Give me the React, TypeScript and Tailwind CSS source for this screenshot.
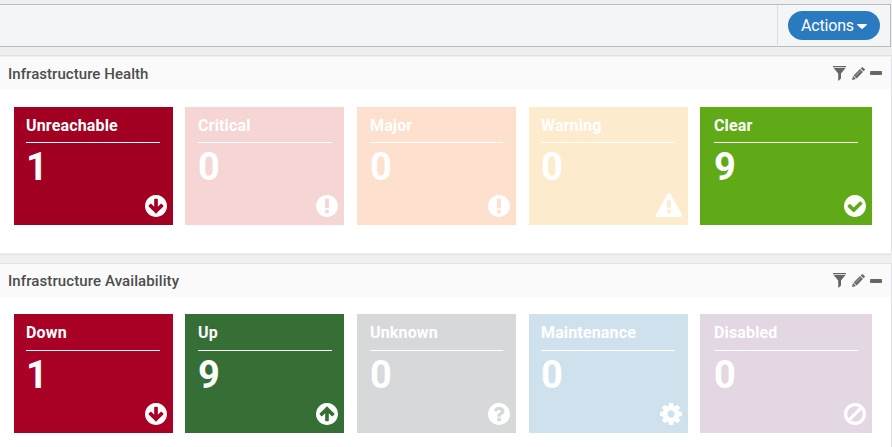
import React from "react";

const DISC =
  "q0 209-103 385.5t-279.5 279.5-385.5 103-385.5-103-279.5-279.5-103-385.5 103-385.5 279.5-279.5 385.5-103 385.5 103 279.5 279.5 103 385.5z";

const ARROW =
  "M1413 896q0-27-18-45l-91-91q-18-18-45-18t-45 18l-189 189v-502q0-26-19-45t-45-19h-128q-26 0-45 19t-19 45v502l-189-189q-19-19-45-19t-45 19l-91 91q-18 18-18 45t18 45l362 362 91 91q18 18 45 18t45-18l91-91 362-362q18-18 18-45zm251 0" + DISC;

const PATHS = {
  down: ARROW,
  up: ARROW,
  alert:
    "M896 128q209 0 385.5 103t279.5 279.5 103 385.5-103 385.5-279.5 279.5-385.5 103-385.5-103-279.5-279.5-103-385.5 103-385.5 279.5-279.5 385.5-103zm128 1247v-190q0-14-9-23.5t-22-9.5h-192q-13 0-23 10t-10 23v190q0 13 10 23t23 10h192q13 0 22-9.5t9-23.5zm-2-344l18-621q0-12-10-18-10-8-24-8h-220q-14 0-24 8-10 6-10 18l17 621q0 10 10 17.5t24 7.5h185q14 0 23.5-7.5t10.5-17.5z",
  triangle:
    "M1024 1375v-190q0-14-9.5-23.5t-22.5-9.5h-192q-13 0-22.5 9.5t-9.5 23.5v190q0 14 9.5 23.5t22.5 9.5h192q13 0 22.5-9.5t9.5-23.5zm-2-374l18-459q0-12-10-19-13-11-24-11h-220q-11 0-24 11-10 7-10 21l17 457q0 10 10 16.5t24 6.5h185q14 0 23.5-6.5t10.5-16.5zm-14-934l768 1408q35 63-2 126-17 29-46.5 46t-63.5 17h-1536q-34 0-63.5-17t-46.5-46q-37-63-2-126l768-1408q17-31 47-49t65-18 65 18 47 49z",
  check:
    "M1412 734q0-28-18-46l-91-90q-19-19-45-19t-45 19l-408 407-226-226q-19-19-45-19t-45 19l-91 90q-18 18-18 46 0 27 18 45l362 362q19 19 45 19 27 0 46-19l543-543q18-18 18-45zm252 162" + DISC,
  question:
    "M1024 1376v-192q0-14-9-23t-23-9h-192q-14 0-23 9t-9 23v192q0 14 9 23t23 9h192q14 0 23-9t9-23zm256-672q0-88-55.5-163t-138.5-116-170-41q-243 0-371 213-15 24 8 42l132 100q7 6 19 6 16 0 25-12 53-68 86-92 34-24 86-24 48 0 85.5 26t37.5 59q0 38-20 61t-68 45q-63 28-115.5 86.5t-52.5 125.5v36q0 14 9 23t23 9h192q14 0 23-9t9-23q0-19 21.5-49.5t54.5-49.5q32-18 49-28.5t46-35 44.5-48 28-60.5 12.5-81zm384 192" + DISC,
  cog: "M1152 896q0-106-75-181t-181-75-181 75-75 181 75 181 181 75 181-75 75-181zm512-109v222q0 12-8 23t-20 13l-185 28q-19 54-39 91 35 50 107 138 10 12 10 25t-9 23q-27 37-99 108t-94 71q-12 0-26-9l-138-108q-44 23-91 38-16 136-29 186-7 28-36 28h-222q-14 0-24.5-8.5t-11.5-21.5l-28-184q-49-16-90-37l-141 107q-10 9-25 9-14 0-25-11-126-114-165-168-7-10-7-23 0-12 8-23 15-21 51-66.5t54-70.5q-27-50-41-99l-183-27q-13-2-21-12.5t-8-23.5v-222q0-12 8-23t19-13l186-28q14-46 39-92-40-57-107-138-10-12-10-24 0-10 9-23 26-36 98.5-107.5t94.5-71.5q13 0 26 10l138 107q44-23 91-38 16-136 29-186 7-28 36-28h222q14 0 24.5 8.5t11.5 21.5l28 184q49 16 90 37l142-107q9-9 24-9 13 0 25 10 129 119 165 170 7 8 7 22 0 12-8 23-15 21-51 66.5t-54 70.5q26 50 41 98l183 28q13 2 21 12.5t8 23.5z",
};

type IconName = keyof typeof PATHS | "ban";

function StatusIcon({ name }: { name: IconName }) {
  if (name === "ban") {
    return (
      <svg className="size-[22px]" viewBox="0 0 22 22" fill="none" stroke="currentColor" strokeWidth="3.2">
        <circle cx="11" cy="11" r="9.4" />
        <path d="M4.6 17.4 17.4 4.6" />
      </svg>
    );
  }
  if (name === "triangle") {
    return (
      <svg className="h-6 w-[26px]" viewBox="0 0 1792 1664" preserveAspectRatio="none" fill="currentColor">
        <path d={PATHS.triangle} />
      </svg>
    );
  }
  return (
    <svg className={name === "up" ? "size-[22px] rotate-180" : "size-[22px]"} viewBox="128 128 1536 1536" fill="currentColor">
      <path d={PATHS[name]} />
    </svg>
  );
}

type TileData = { label: string; value: number; icon: IconName; box: string };

const HEALTH: TileData[] = [
  { label: "Unreachable", value: 1, icon: "down", box: "w-[159px] mr-3 pl-3 pr-[13px] bg-[#a20023]" },
  { label: "Critical", value: 0, icon: "alert", box: "w-[159px] mr-[13px] pl-[13px] pr-3 bg-[#f5d6d5]" },
  { label: "Major", value: 0, icon: "alert", box: "w-[159px] mr-[13px] px-[13px] bg-[#fde0cd]" },
  { label: "Warning", value: 0, icon: "triangle", box: "w-[159px] mr-3 pl-3 pr-[13px] bg-[#fdebce]" },
  { label: "Clear", value: 9, icon: "check", box: "w-[172px] px-3.5 bg-[#60aa18]" },
];

const AVAILABILITY: TileData[] = [
  { label: "Down", value: 1, icon: "down", box: "w-[159px] mr-3 pl-3 pr-[13px] bg-[#a90026]" },
  { label: "Up", value: 9, icon: "up", box: "w-[159px] mr-[13px] pl-[13px] pr-3 bg-[#356f35]" },
  { label: "Unknown", value: 0, icon: "question", box: "w-[159px] mr-[13px] px-[13px] bg-[#d7d8da]" },
  { label: "Maintenance", value: 0, icon: "cog", box: "w-[159px] mr-3 pl-3 pr-[13px] bg-[#d0e1ee]" },
  { label: "Disabled", value: 0, icon: "ban", box: "w-[172px] px-3.5 bg-[#e3d7e3]" },
];

function Tile({ tile, tall }: { tile: TileData; tall: boolean }) {
  return (
    <div className={`relative flex shrink-0 flex-col text-white ${tall ? "h-[119px]" : "h-[118px]"} ${tile.box}`}>
      <div className={`border-b border-white pt-[9px] text-base leading-5 font-bold tracking-[0.15px] ${tall ? "h-[37px]" : "h-9"}`}>{tile.label}</div>
      <div className="mt-1.5 text-[38px] leading-9 font-bold">{tile.value}</div>
      <div className="absolute right-1.5 bottom-2">
        <StatusIcon name={tile.icon} />
      </div>
    </div>
  );
}

function Panel({ title, tiles, tall, className }: { title: string; tiles: TileData[]; tall: boolean; className: string }) {
  return (
    <section className={`border-r border-[#dddfe2] bg-white ${className}`}>
      <header className={`flex items-center justify-between bg-[#fafafa] pr-[9px] pl-2 text-[#4d4d4d] ${tall ? "h-[33px]" : "h-8"}`}>
        <h2 className={`text-[15px] leading-5 font-medium ${tall ? "tracking-[0.1px]" : "pt-0.5 tracking-[0.05px]"}`}>{title}</h2>
        <div className="flex items-center text-[#666]">
          <svg className="mr-1.5 h-[15px] w-[13px]" viewBox="0 0 13 15" fill="currentColor">
            <path d="M0 0h13v1.2H0zM.5 2h12L8 7.5v5L5.2 15V7.5z" />
          </svg>
          <svg className="mr-[5px] size-[13px]" viewBox="0 0 13 13" fill="currentColor">
            <path d="M9.7.4q.6-.6 1.2 0l1.7 1.7q.6.6 0 1.2l-1 1L8.7 1.4zM8 2.1 10.9 5 4.6 11.4 1.6 8.4zM1 9l3 3-4 1z" />
            <path d="M3.6 8.8 8.6 3.8" stroke="#c4c4c4" strokeWidth=".8" />
          </svg>
          <svg className="h-1 w-3" viewBox="0 0 12 4" fill="currentColor">
            <rect width="12" height="4" rx="1" />
          </svg>
        </div>
      </header>
      <div className={`flex pl-3.5 ${tall ? "pt-[17px]" : "pt-[18px]"}`}>
        {tiles.map((tile) => (
          <Tile key={tile.label} tile={tile} tall={tall} />
        ))}
      </div>
    </section>
  );
}

export default function App() {
  return (
    <div className="h-[447px] w-[892px] overflow-hidden bg-[#efefef] pt-1 font-[Roboto,sans-serif]">
      <div className="mr-px flex h-[43px] justify-end border-y border-r border-[#b9bbbe] bg-[#f3f5f7]">
        <div className="mb-px flex w-[113px] border-l border-[#d9dbde] pt-1.5 pl-2.5">
          <button className="flex h-[29px] w-[92px] items-center justify-center rounded-full bg-[#2a7abf] pt-px text-base tracking-[-0.2px] text-white">
            Actions
            <svg className="ml-[3px] h-[5px] w-2.5" viewBox="0 0 9 5" preserveAspectRatio="none" fill="currentColor">
              <path d="M.5 0h8q.8.2.3.9L5 4.7q-.5.4-1 0L.2.9Q-.3.2.5 0z" />
            </svg>
          </button>
        </div>
      </div>
      <div className="mt-2 border-y border-[#e2e2e2] py-px">
        <Panel title="Infrastructure Health" tiles={HEALTH} tall={false} className="h-[196px]" />
      </div>
      <div className="mt-2 border-t border-[#e2e3e5]">
        <Panel title="Infrastructure Availability" tiles={AVAILABILITY} tall className="h-[183px]" />
      </div>
    </div>
  );
}
